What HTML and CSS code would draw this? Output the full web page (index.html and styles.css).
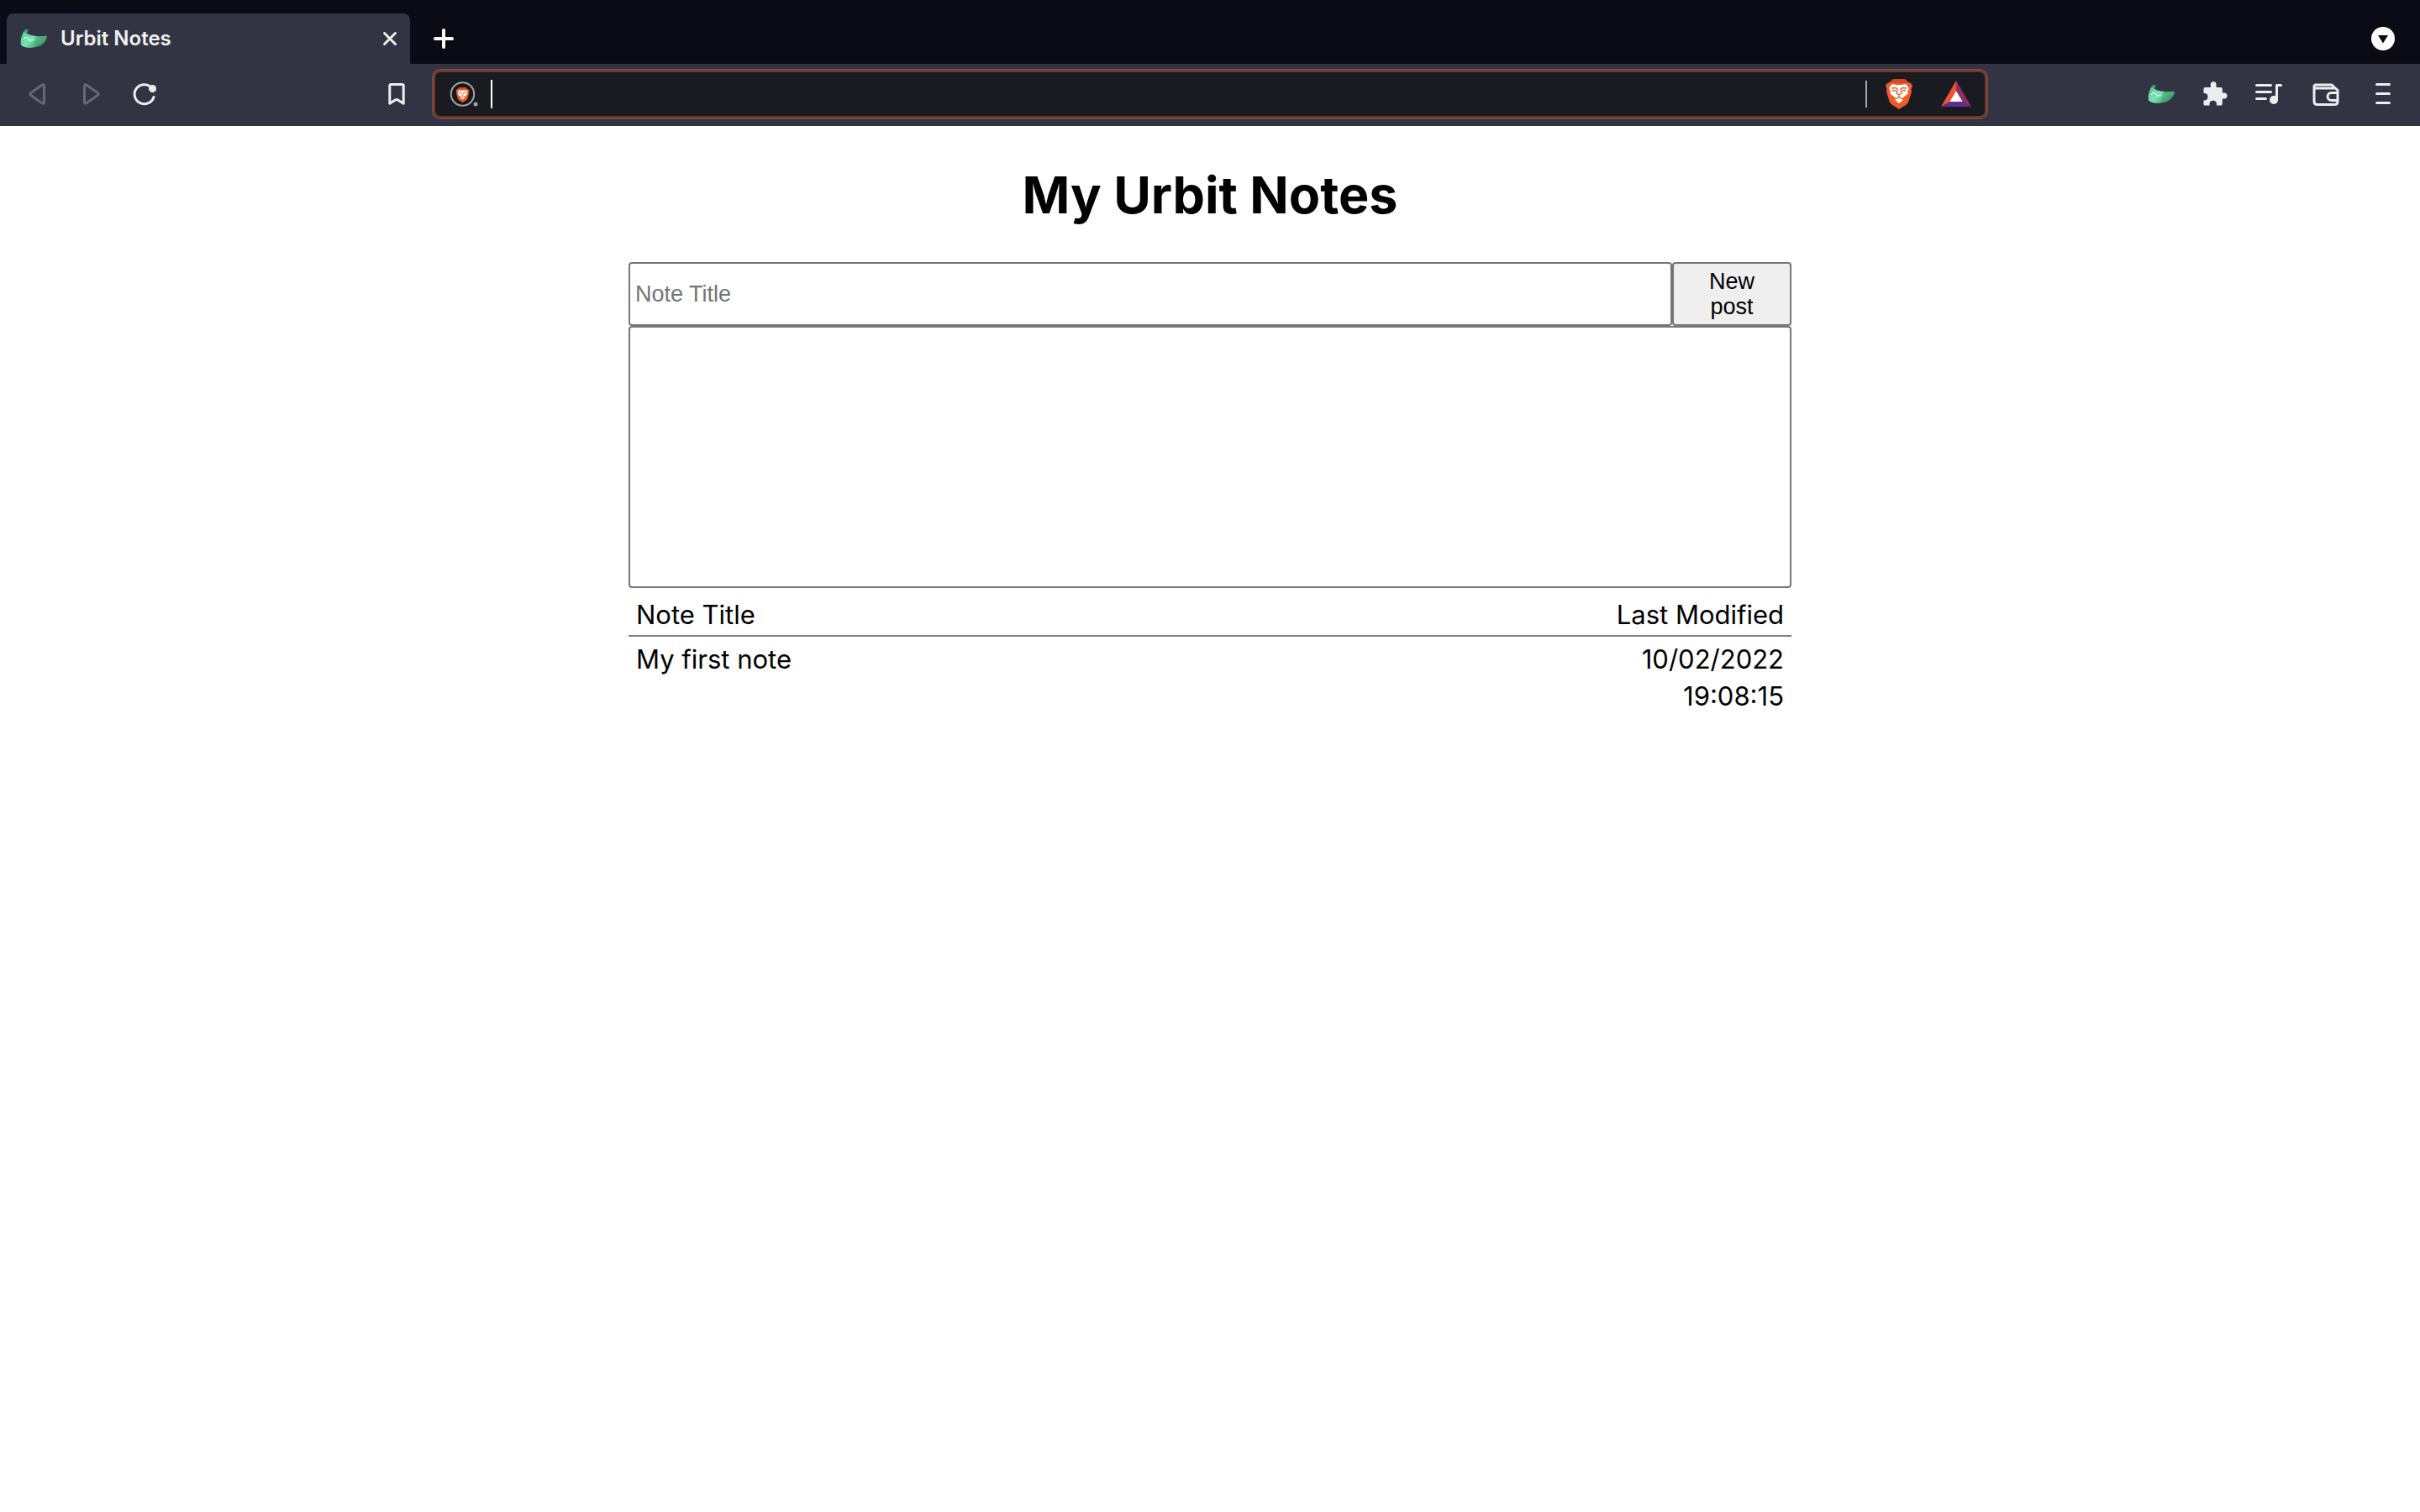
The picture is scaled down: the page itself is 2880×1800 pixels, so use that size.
FILE: index.html
```html
<!DOCTYPE html>
<html lang="en">
<head>
<meta charset="utf-8">
<title>Urbit Notes</title>
<link rel="stylesheet" href="styles.css">
</head>
<body>
<svg class="sprite" aria-hidden="true">
  <defs>
    <linearGradient id="maskLight" x1="0" y1="0" x2="1" y2="1">
      <stop offset="0" stop-color="#55c795"/>
      <stop offset=".55" stop-color="#7be3b3"/>
      <stop offset="1" stop-color="#3fa36e"/>
    </linearGradient>
    <linearGradient id="maskDark" x1="0" y1="0" x2="1" y2="1">
      <stop offset="0" stop-color="#5ccb92"/>
      <stop offset="1" stop-color="#37845a"/>
    </linearGradient>
  </defs>
  <symbol id="mask" viewBox="0 0 32 24">
    <path d="M4.500 3C6 .500 8 0 9.500 1.500L9 4.500 5 6Z" fill="#3f9d70"/>
    <path d="M4.200 3.500C9 7 14 8.600 19.500 9L16 22.500C10 23.700 4 22.500 1 19.500 0 13 2 8 4.200 3.500Z" fill="url(#maskLight)"/>
    <path d="M19 9C24 9.500 28 9 32 8.800C31.500 16 25 22 15.500 22.600Z" fill="url(#maskDark)"/>
    <path d="M4.500 12.500C6 9.500 8.500 10 10 12.500S13.500 14.500 15.500 13" fill="none" stroke="#d9f8e9" stroke-width="1.300" stroke-linecap="round"/>
  </symbol>
  <symbol id="lion" viewBox="0 0 32 36">
    <path d="M8 1 10 0H22L24 1 27 4 30 5 32 8 30.500 12 31 15 27 28 24 31 16 36 8 31 5 28 1 15 1.500 12 0 8 2 5 5 4Z" fill="#ef5b29"/>
    <path d="M8 1 10 0H22L24 1 27 4 22 5H10L5 4Z" fill="#d9481f"/>
    <path d="M8 6 13 7H19L24 6 28 11 26 15 27 17 21 22 20 23 16 21 12 23 11 22 5 17 6 15 4 11Z" fill="#fff"/>
    <path d="M16 22.500 21 25 16 29 11 25Z" fill="#fff"/>
    <path d="M7 11 12 10.500 14 12 13 17 16 19 19 17 18 12 20 10.500 25 11M8 13.500 12 14M24 13.500 20 14M16 18V22" fill="none" stroke="#ef5b29" stroke-width="1.400"/>
  </symbol>
</svg>

<header class="browser">
  <div class="tabs">
    <div class="tab">
      <svg class="mask"><use href="#mask"/></svg>
      <span class="tab-title">Urbit Notes</span>
      <button class="icon-button small" aria-label="Close tab">
        <svg viewBox="0 0 24 24"><path d="M5.500 5.500 18.500 18.500M18.500 5.500 5.500 18.500" class="line"/></svg>
      </button>
    </div>
    <button class="icon-button new-tab" aria-label="New tab">
      <svg viewBox="0 0 40 40"><path d="M20 10V30M10 20H30" class="line white bold"/></svg>
    </button>
    <button class="icon-button tab-search" aria-label="Search tabs">
      <svg viewBox="0 0 40 40"><circle cx="20" cy="20" r="14" fill="#fff"/><path d="M14 16H26L20 25.500Z" fill="#0b0b16"/></svg>
    </button>
  </div>

  <div class="toolbar">
    <nav class="navigation" aria-label="Browser navigation">
      <button class="icon-button" aria-label="Back" disabled>
        <svg viewBox="0 0 40 40"><path d="M12.500 18.700 26 9.200Q28.500 7.800 28.500 10.500V29.500Q28.500 32.200 26 30.800L12.500 21.300Q11.300 20 12.500 18.700Z" class="line dim"/></svg>
      </button>
      <button class="icon-button" aria-label="Forward" disabled>
        <svg viewBox="0 0 40 40"><path d="M28.500 18.700 15 9.200Q12.500 7.800 12.500 10.500V29.500Q12.500 32.200 15 30.800L28.500 21.300Q29.700 20 28.500 18.700Z" class="line dim"/></svg>
      </button>
      <button class="icon-button" aria-label="Reload">
        <svg viewBox="0 0 40 40"><path d="M31 23.500A11.700 11.500 0 1 1 27.500 11.500" class="line"/><circle cx="29.500" cy="13.500" r="4.500" class="solid"/></svg>
      </button>
      <button class="icon-button bookmark" aria-label="Bookmark this page">
        <svg viewBox="0 0 40 40"><path d="M11.800 31.300V10Q11.800 8.500 13.300 8.500H26.700Q28.200 8.500 28.200 10V31.300L21.500 27Q20 26 18.500 27Z" class="line"/></svg>
      </button>
    </nav>

    <div class="address">
      <svg class="engine" viewBox="0 0 36 36">
        <circle cx="16.500" cy="18" r="13.700" fill="#17181f" stroke="#a2a3a8" stroke-width="2"/>
        <use href="#lion" x="8.500" y="9.500" width="16" height="19"/>
        <circle cx="32" cy="30" r="2.500" fill="#a2a3a8"/>
      </svg>
      <span class="caret"></span>
      <input class="address-input" type="text" aria-label="Address and search bar">
      <span class="divider"></span>
      <button class="icon-button" aria-label="Brave Shields">
        <svg viewBox="0 0 40 40"><use href="#lion" x="4" y="2" width="32" height="36"/></svg>
      </button>
      <button class="icon-button rewards" aria-label="Brave Rewards">
        <svg viewBox="0 0 40 40">
          <path d="M20 4V16L13 29 2 35Z" fill="#f0532d"/>
          <path d="M20 4 38 35 27 29 20 16Z" fill="#952c62"/>
          <path d="M2 35 13 29H27L38 35Z" fill="#5e2d91"/>
          <path d="M20 16 27.500 29H12.500Z" fill="#fff"/>
        </svg>
      </button>
    </div>

    <div class="extensions">
      <button class="icon-button" aria-label="Urbit Visor"><svg class="mask"><use href="#mask"/></svg></button>
      <button class="icon-button" aria-label="Extensions">
        <svg viewBox="0 0 40 40"><path d="M8 12Q6.500 12 6.500 14V19H8.500A4.500 4.500 0 0 1 8.500 27.500H6.500V32Q6.500 33.500 8 33.500H13.500V31.500A4.300 4.300 0 0 1 22 31.500V33.500H27Q28.800 33.500 28.800 31.500V25.500H31A3.300 3.300 0 0 0 31 18.500H28.800V14Q28.800 12 27 12H21.500V8.500A3.300 3.300 0 0 0 14.800 8.500V12Z" class="solid"/></svg>
      </button>
      <button class="icon-button" aria-label="Playlist">
        <svg viewBox="0 0 40 40"><path d="M5.500 9.500H22.500M5.500 17.500H22.500M5.500 25.500H16.500M29.500 26V9.500H34.500" class="line"/><circle cx="26" cy="27" r="5" class="solid"/></svg>
      </button>
      <button class="icon-button wallet" aria-label="Wallet">
        <svg viewBox="0 0 40 40"><path d="M8 9H27L34 15.500V28.500Q34 32.500 30 32.500H10Q6 32.500 6 28.500V11Q6 9 8 9ZM7 13H30M34 18.500H26.500A4.500 4.500 0 0 0 26.500 27.500H34" class="line"/></svg>
      </button>
      <button class="icon-button" aria-label="Menu">
        <svg viewBox="0 0 40 40"><path d="M12.500 8.500H27.500M12.500 19.500H27.500M12.500 30.500H27.500" class="line"/></svg>
      </button>
    </div>
  </div>
</header>

<main class="notes">
  <h1 class="heading">My Urbit Notes</h1>
  <form class="editor">
    <div class="title-row">
      <input class="field title-input" type="text" placeholder="Note Title" aria-label="Note title">
      <button class="field new-post" type="button">New post</button>
    </div>
    <textarea class="field body-input" aria-label="Note text"></textarea>
  </form>
  <table class="note-table">
    <thead>
      <tr><th scope="col">Note Title</th><th scope="col" class="date">Last Modified</th></tr>
    </thead>
    <tbody>
      <tr><td>My first note</td><td class="date">10/02/2022 19:08:15</td></tr>
    </tbody>
  </table>
</main>
</body>
</html>
```
FILE: styles.css
```css
* {
  box-sizing: border-box;
}

body {
  margin: 0;
  background: #fff;
  color: #000;
  font-family: Inter, "Liberation Sans", sans-serif;
}

.sprite {
  position: absolute;
  width: 0;
  height: 0;
}

/* Browser frame */
.tabs {
  display: flex;
  align-items: flex-end;
  height: 76px;
  padding: 0 24px 0 8px;
  background: #0b0b16;
}

.tab {
  display: flex;
  align-items: center;
  width: 480px;
  height: 60px;
  padding: 0 12px 0 16px;
  border-radius: 8px 8px 0 0;
  background: #323443;
}

.mask {
  width: 32px;
  height: 24px;
}

.tab-title {
  flex: 1;
  margin-left: 16px;
  color: #f0f0f2;
  font-size: 24px;
  font-weight: 600;
  line-height: 28px;
}

.icon-button {
  display: flex;
  align-items: center;
  justify-content: center;
  flex: none;
  width: 40px;
  height: 40px;
  padding: 0;
  border: 0;
  background: none;
}

.icon-button svg:not(.mask) {
  width: 40px;
  height: 40px;
}

.icon-button.small,
.icon-button.small svg:not(.mask) {
  width: 24px;
  height: 24px;
}

.new-tab {
  margin: 0 0 10px 20px;
}

.tab-search {
  margin: 0 0 10px auto;
}

.line {
  fill: none;
  stroke: #ededee;
  stroke-width: 3;
  stroke-linecap: round;
  stroke-linejoin: round;
}

.line.dim {
  stroke: #666873;
}

.line.bold {
  stroke-width: 4;
}

.line.white {
  stroke: #fff;
}

.solid {
  fill: #ededee;
}

.toolbar {
  display: flex;
  align-items: center;
  height: 74px;
  padding-bottom: 2px;
  background: #323443;
}

.navigation {
  display: flex;
  gap: 24px;
  width: 514px;
  padding: 0 22px 0 24px;
}

.bookmark {
  margin-left: auto;
}

.address {
  display: flex;
  flex: 1;
  align-items: center;
  height: 60px;
  padding: 0 16px 0 18px;
  border: 2px solid #7f463e;
  border-radius: 10px;
  background: #1a1b20;
  box-shadow: inset 0 0 0 2px #6c392e;
}

.engine {
  width: 36px;
  height: 36px;
  margin-right: 14px;
}

.caret {
  width: 2px;
  height: 34px;
  background: #fff;
}

.address-input {
  flex: 1;
  min-width: 0;
  height: 40px;
  padding: 0 8px;
  border: 0;
  background: none;
  color: #fff;
  font: inherit;
  font-size: 27px;
}

.divider {
  width: 2px;
  height: 32px;
  margin-right: 18px;
  background: #a9a9ac;
}

.rewards {
  margin-left: 28px;
}

.extensions {
  display: flex;
  justify-content: flex-end;
  gap: 24px;
  width: 514px;
  padding-right: 24px;
}

.wallet {
  width: 48px;
}

/* Notes page */
.notes {
  width: 100%;
  max-width: 1384px;
  margin: 0 auto;
  padding: 44px 0;
}

.heading {
  margin: 0 0 42px;
  font-size: 61px;
  font-weight: 700;
  line-height: 76px;
  text-align: center;
}

.editor {
  display: flex;
  flex-direction: column;
}

.title-row {
  display: flex;
}

.field {
  margin: 0;
  border: 2px solid #767676;
  border-radius: 4px;
  font-family: "Liberation Sans", Arial, sans-serif;
  font-size: 27px;
  line-height: 30px;
}

.title-input {
  flex: 1;
  min-width: 0;
  padding: 2px 6px;
}

.title-input::placeholder {
  color: #757575;
}

.new-post {
  width: 142px;
  padding: 6px 16px;
  background: #efefef;
  color: #000;
}

.body-input {
  height: 312px;
  padding: 6px;
  resize: none;
}

.note-table {
  width: 100%;
  border-collapse: separate;
  border-spacing: 0;
  table-layout: fixed;
  font-size: 31px;
  line-height: 44px;
}

.note-table th,
.note-table td {
  padding: 5px 9px;
  font-weight: 400;
  text-align: left;
  vertical-align: top;
}

.note-table th {
  padding: 10px 9px 2px;
  border-bottom: 2px solid #808080;
}

.note-table .date {
  width: 240px;
  text-align: right;
}
```
